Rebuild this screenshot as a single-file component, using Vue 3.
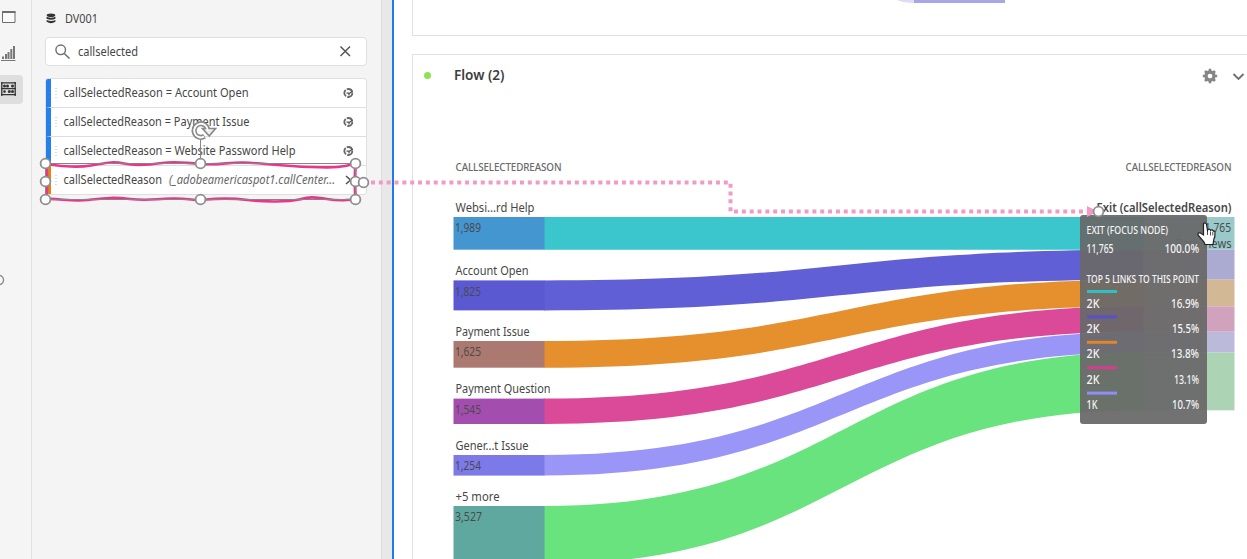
<script setup>
const components = [
  { name: 'callSelectedReason = Account Open', w: 185 },
  { name: 'callSelectedReason = Payment Issue', w: 186 },
  { name: 'callSelectedReason = Website Password Help', w: 232 },
]

const scale = 0.01643
const nodes = [
  { label: 'Websi...rd Help', lw: 79, value: '1,989', n: 1989, y: 217, node: '#4396d0', link: '#3bc5cc', end: '#9ac9ca' },
  { label: 'Account Open', lw: 73, value: '1,825', n: 1825, y: 280.4, node: '#5b59d2', link: '#605fd5', end: '#abaad0' },
  { label: 'Payment Issue', lw: 74, value: '1,625', n: 1625, y: 341, node: '#ab7970', link: '#e6902d', end: '#d3b896' },
  { label: 'Payment Question', lw: 95, value: '1,545', n: 1545, y: 398.6, node: '#a34eae', link: '#db4999', end: '#d0a2be' },
  { label: 'Gener...t Issue', lw: 73, value: '1,254', n: 1254, y: 455, node: '#7c7ae8', link: '#9a96f8', end: '#bbbadb' },
  { label: '+5 more', lw: 44, value: '3,527', n: 3527, y: 506, node: '#5fa8a0', link: '#68e37d', end: '#acd3b3' },
]
let top = 217
for (const d of nodes) {
  d.h = d.n * scale
  d.ey = top
  top += d.h
  const b = d.y + d.h
  d.path = `M544 ${d.y}C844 ${d.y} 844 ${d.ey} 1144 ${d.ey}V${top}C844 ${top} 844 ${b} 544 ${b}Z`
}

const links = [
  { color: '#2fc0c4', count: '2K', pct: '16.9%', cw: 13, w: 28 },
  { color: '#5552cb', count: '2K', pct: '15.5%', cw: 13, w: 27 },
  { color: '#e08727', count: '2K', pct: '13.8%', cw: 13, w: 28 },
  { color: '#d83c91', count: '2K', pct: '13.1%', cw: 13, w: 25 },
  { color: '#918df2', count: '1K', pct: '10.7%', cw: 11, w: 27 },
]
const handles = [[45.5, 163.5], [200.5, 163.5], [355.5, 163.5], [45.5, 181.5], [355.5, 181.5], [363.5, 182.5], [45.5, 199.5], [200.5, 199.5], [355.5, 199.5], [1098.5, 211.5]]
</script>

<template>
  <div class="app">
    <nav class="rail">
      <div class="rail-item">
        <svg width="23" height="29"><path d="M2.5 11.5h12.5v11h-12.5z" fill="#fafafa" stroke="#6e6e6e" /><path d="M2 12h13.5" stroke="#6e6e6e" stroke-width="2" /></svg>
      </div>
      <div class="rail-item">
        <svg width="23" height="29"><path d="M1 24.5h14.5" stroke="#777" /><path d="M3 20.5v2.5M6 18v5M8.5 16v7M11.3 13v10M14 10v13" stroke="#777" stroke-width="2" /></svg>
      </div>
      <div class="rail-item active">
        <svg width="23" height="29"><path d="M1.8 7v14M15.2 7v14M1 7.8h15M1 13.6h15M1 19.6h15" stroke="#333" stroke-width="1.3" fill="none" /><g fill="#333"><circle cx="4.5" cy="11" r="1.5" /><circle cx="7.5" cy="11" r="1.5" /><circle cx="12.5" cy="11" r="1.5" /><circle cx="4.5" cy="16.6" r="1.3" /><circle cx="9.3" cy="16.6" r="1.5" /><circle cx="12.5" cy="16.6" r="1.5" /></g></svg>
      </div>
      <svg class="knob" width="6" height="12"><circle cx="-1" cy="6" r="4.5" fill="#fff" stroke="#8a8a8a" stroke-width="1.5" /></svg>
    </nav>

    <aside class="panel">
      <header class="source">
        <svg width="10" height="11"><g fill="#333"><ellipse cx="5" cy="2.2" rx="4.3" ry="1.8" /><path d="M.6 3.8q4.4 2 8.8 0v2q-4.4 2-8.8 0zM.6 7q4.4 2 8.8 0v1.8q-4.4 2.8-8.8 0z" /></g></svg>
        <svg width="60" height="20"><text x="9" y="15" textLength="33" lengthAdjust="spacingAndGlyphs">DV001</text></svg>
      </header>
      <div class="search">
        <svg width="320" height="27">
          <circle cx="14.7" cy="11.8" r="4.8" fill="none" stroke="#6e6e6e" stroke-width="1.4" />
          <path d="M18.3 15.5l5.2 5" stroke="#6e6e6e" stroke-width="1.6" />
          <text x="32" y="18" textLength="60" lengthAdjust="spacingAndGlyphs">callselected</text>
          <path d="M294.5 8.5l9.5 9.5M304 8.5l-9.5 9.5" stroke="#555" stroke-width="1.5" />
        </svg>
      </div>
      <div class="list">
        <div v-for="c in components" :key="c.name" class="row">
          <svg width="315" height="28">
            <path d="M5 9v12" stroke="#dcdcdc" stroke-dasharray="1 2" stroke-width="2" />
            <text x="12.5" y="18" :textLength="c.w" lengthAdjust="spacingAndGlyphs">{{ c.name }}</text>
            <circle cx="297.3" cy="14" r="4" fill="none" stroke="#666" stroke-width="1.8" stroke-dasharray="7.2 1.2" />
            <path d="M295.5 14.2h3.2l3-2.2M298 14.4v2" fill="none" stroke="#555" stroke-width="1.3" />
          </svg>
        </div>
        <div class="row metric">
          <svg width="315" height="28">
            <path d="M5 9v12" stroke="#dcdcdc" stroke-dasharray="1 2" stroke-width="2" />
            <text x="12.5" y="18" textLength="98.5" lengthAdjust="spacingAndGlyphs">callSelectedReason</text>
            <text class="path" x="118" y="18" textLength="166" lengthAdjust="spacingAndGlyphs">(_adobeamericaspot1.callCenter...</text>
            <path d="M295 10l4.5 4-4.5 4" fill="none" stroke="#555" stroke-width="1.6" />
          </svg>
        </div>
      </div>
    </aside>
    <div class="gutter"></div>

    <main>
      <section class="card previous"><svg width="834" height="34"><path d="M484 0h18v3q-12 0-18-3" fill="#dedcf5" /><path d="M501 0h91v3h-91z" fill="#a9a6e6" /></svg></section>
      <section class="card flow">
        <header class="card-head">
          <i class="status"></i>
          <svg class="title" width="60" height="22"><text x="0" y="15.5" textLength="50.5" lengthAdjust="spacingAndGlyphs">Flow (2)</text></svg>
          <svg class="tools" width="48" height="20">
            <g transform="translate(11 11)"><circle r="4" fill="none" stroke="#858585" stroke-width="3.3" /><path d="M0-7.2v3M0 4.2v3M-7.2 0h3M4.2 0h3M-5-5l2 2M3 3l2 2M-5 5l2-2M3-3l2-2" stroke="#858585" stroke-width="2.6" /></g>
            <path d="M34.5 9l5 5 5-5" fill="none" stroke="#6e6e6e" stroke-width="1.8" />
          </svg>
        </header>
        <svg class="chart" viewBox="413 95 834 464" width="834" height="464">
          <g class="heads">
            <text x="455.5" y="171" textLength="106">CALLSELECTEDREASON</text>
            <text x="1125.5" y="171" textLength="106">CALLSELECTEDREASON</text>
          </g>
          <g v-for="d in nodes" :key="d.label">
            <path :d="d.path" :fill="d.link" />
            <rect x="453.5" :y="d.y" width="91" :height="d.h" :fill="d.node" />
            <rect x="1143.5" :y="d.ey" width="91" :height="d.h" :fill="d.end" />
            <text x="455.5" :y="Math.round(d.y - 5.2)" :textLength="d.lw" lengthAdjust="spacingAndGlyphs">{{ d.label }}</text>
            <text class="num" x="455" :y="Math.round(d.y + 15.2)" :textLength="d.value === '3,527' ? 27 : 26" lengthAdjust="spacingAndGlyphs">{{ d.value }}</text>
          </g>
          <text class="exit" x="1096.5" y="212" textLength="135" lengthAdjust="spacingAndGlyphs">Exit (callSelectedReason)</text>
          <text class="dim" x="1199" y="232" textLength="32" lengthAdjust="spacingAndGlyphs">11,765</text>
          <text class="dim" x="1176" y="248" textLength="55.5" lengthAdjust="spacingAndGlyphs">Path views</text>
        </svg>
      </section>
    </main>

    <div class="tooltip">
      <svg width="127" height="209">
        <text x="6.5" y="19" textLength="81.5" lengthAdjust="spacingAndGlyphs">EXIT (FOCUS NODE)</text>
        <text class="big" x="6.5" y="37.5" textLength="27" lengthAdjust="spacingAndGlyphs">11,765</text>
        <text class="big" x="84.5" y="37.5" textLength="34.5" lengthAdjust="spacingAndGlyphs">100.0%</text>
        <text x="6.5" y="68.4" textLength="112.5" lengthAdjust="spacingAndGlyphs">TOP 5 LINKS TO THIS POINT</text>
        <g v-for="(l, i) in links" :key="i" :transform="`translate(0 ${i * 25.4})`">
          <rect x="7" y="75" width="30" height="3" :fill="l.color" />
          <text class="big" x="6.5" y="92.5" :textLength="l.cw" lengthAdjust="spacingAndGlyphs">{{ l.count }}</text>
          <text class="big" :x="119 - l.w" y="92.5" :textLength="l.w" lengthAdjust="spacingAndGlyphs">{{ l.pct }}</text>
        </g>
      </svg>
    </div>

    <svg class="annotation" width="1247" height="559">
      <g fill="none" stroke="#e9368c" stroke-linecap="round">
        <path stroke-width="2.6" d="M45 164C62 166 76 168 91 165.5S112 161 124 163.5S148 165 162 163S180 162.5 200 164S228 162 244 162.5S282 166 310 167S342 167 355 164" />
        <path stroke-width="2.6" d="M45 199C60 198 70 202 88 200S112 197 130 199S154 199 172 198.5S190 201 206 199.5S232 198 248 200S288 202 299 199.5S312 196.5 327 199S342 200 355 199.5" />
        <path stroke-width="3" d="M46 164q2 17 0 35M355.5 164q-1 17 0 35" />
      </g>
      <path d="M45.5 163.5h310v36h-310zM200.5 163V138" fill="none" stroke="#858585" />
      <path d="M371 182.5h359.5v29H1090" fill="none" stroke="#f29ac6" stroke-width="4" stroke-dasharray="4 3.84" />
      <path d="M1087 206l11 5.5-11 5.5z" fill="#f29ac6" />
      <circle v-for="(h, i) in handles" :key="i" :cx="h[0]" :cy="h[1]" r="4.9" fill="#fff" stroke="#8e8e8e" stroke-width="1.8" />
      <g fill="none">
        <path d="M207.5 129a6.8 6.8 0 1 0-3 7.3" stroke="#8a8a8a" stroke-width="5.2" />
        <path d="M202.5 128.5h13l-6.3 7.5z" fill="#eee" stroke="#8a8a8a" stroke-width="1.7" />
        <path d="M207.8 130.5a6.8 6.8 0 1 0-3.8 6.2" stroke="#fff" stroke-width="1.9" />
      </g>
      <g transform="translate(1196.5 222)">
        <path d="M7 1.5q2-1.5 3 1l1 6 .5-1q2-1 2.5.8 2-1.2 2.8.8 1.600-.8 1.700 1.700.3 4-1.300 7L16.500 22.500H8.500l-1-2.500L1.500 13q-.5-2.400 2-2.200L7 13z" fill="#fff" stroke="#222" stroke-width="1.200" />
        <path d="M11 9v4M14 9.500v4M16.300 10v3.500" stroke="#222" stroke-width=".8" />
      </g>
    </svg>
  </div>
</template>

<style>
html, body { margin: 0; overflow: hidden; }
</style>
<style scoped>
.app { position: relative; width: 1247px; height: 559px; display: flex; overflow: hidden; background: #fff; font-family: "Noto Sans", "Open Sans", sans-serif; font-size: 12.8px; }
svg { display: block; flex: none; }
svg text { fill: #464646; }
.rail { position: relative; box-sizing: border-box; width: 32px; background: #f5f5f5; border-right: 1px solid #e0e0e0; display: flex; flex-direction: column; gap: 7px; }
.rail-item { width: 23px; height: 29px; }
.rail-item:nth-child(2) { margin-bottom: 3px; }
.rail-item.active { background: #dedede; border-radius: 0 4px 4px 0; }
.knob { position: absolute; left: 0; top: 274px; }
.panel { box-sizing: border-box; width: 349px; background: #f4f4f4; padding: 8px 14px 0 13px; }
.source { display: flex; align-items: center; height: 20px; padding-left: 1px; }
.search { box-sizing: border-box; width: 322px; height: 29px; margin-top: 9px; background: #fff; border: 1px solid #dfdfdf; border-radius: 4px; }
.list { box-sizing: border-box; width: 322px; margin-top: 12px; border: 1px solid #dfdfdf; border-radius: 3px; overflow: hidden; background: #fff; }
.row { box-sizing: border-box; height: 29px; border-bottom: 1px solid #dedede; border-left: 5px solid #2680eb; }
.row.metric { border-left-color: #e08319; border-bottom: 0; height: 28px; }
svg text.path { font-style: italic; fill: #666; }
.gutter { box-sizing: border-box; width: 13px; background: #e8e8e8; border-left: 1px solid #dcdcdc; border-right: 2px solid #1b7cea; }
main { flex: 1; min-width: 0; padding-left: 18px; display: flex; flex-direction: column; gap: 18px; }
.card { box-sizing: border-box; width: 850px; flex: none; border: 1px solid #e1e1e1; background: #fff; }
.previous { height: 36px; border-top: 0; }
.flow { height: 520px; }
.card-head { display: flex; align-items: center; height: 40px; padding-left: 11px; }
.status { width: 7px; height: 7px; border-radius: 50%; background: #91e153; }
.title { margin-left: 23px; }
.title text { font-size: 14px; font-weight: 600; fill: #3d3d3d; }
.tools { margin-left: 685px; }
.chart { overflow: hidden; }
.heads text { font-size: 9.8px; font-weight: 500; fill: #6a6a6a; }
.exit { font-weight: 600; }
.chart .num, .chart .dim { fill: #4b4b4b; }
.chart .dim { font-size: 12.3px; }
.tooltip { position: absolute; left: 1080px; top: 215px; width: 127px; height: 209px; border-radius: 3px; background: rgba(105, 105, 105, .94); }
.tooltip text { fill: #f4f4f4; font-size: 10.8px; font-weight: 500; }
.tooltip .big { font-size: 12.3px; }
.annotation { position: absolute; left: 0; top: 0; }
</style>
